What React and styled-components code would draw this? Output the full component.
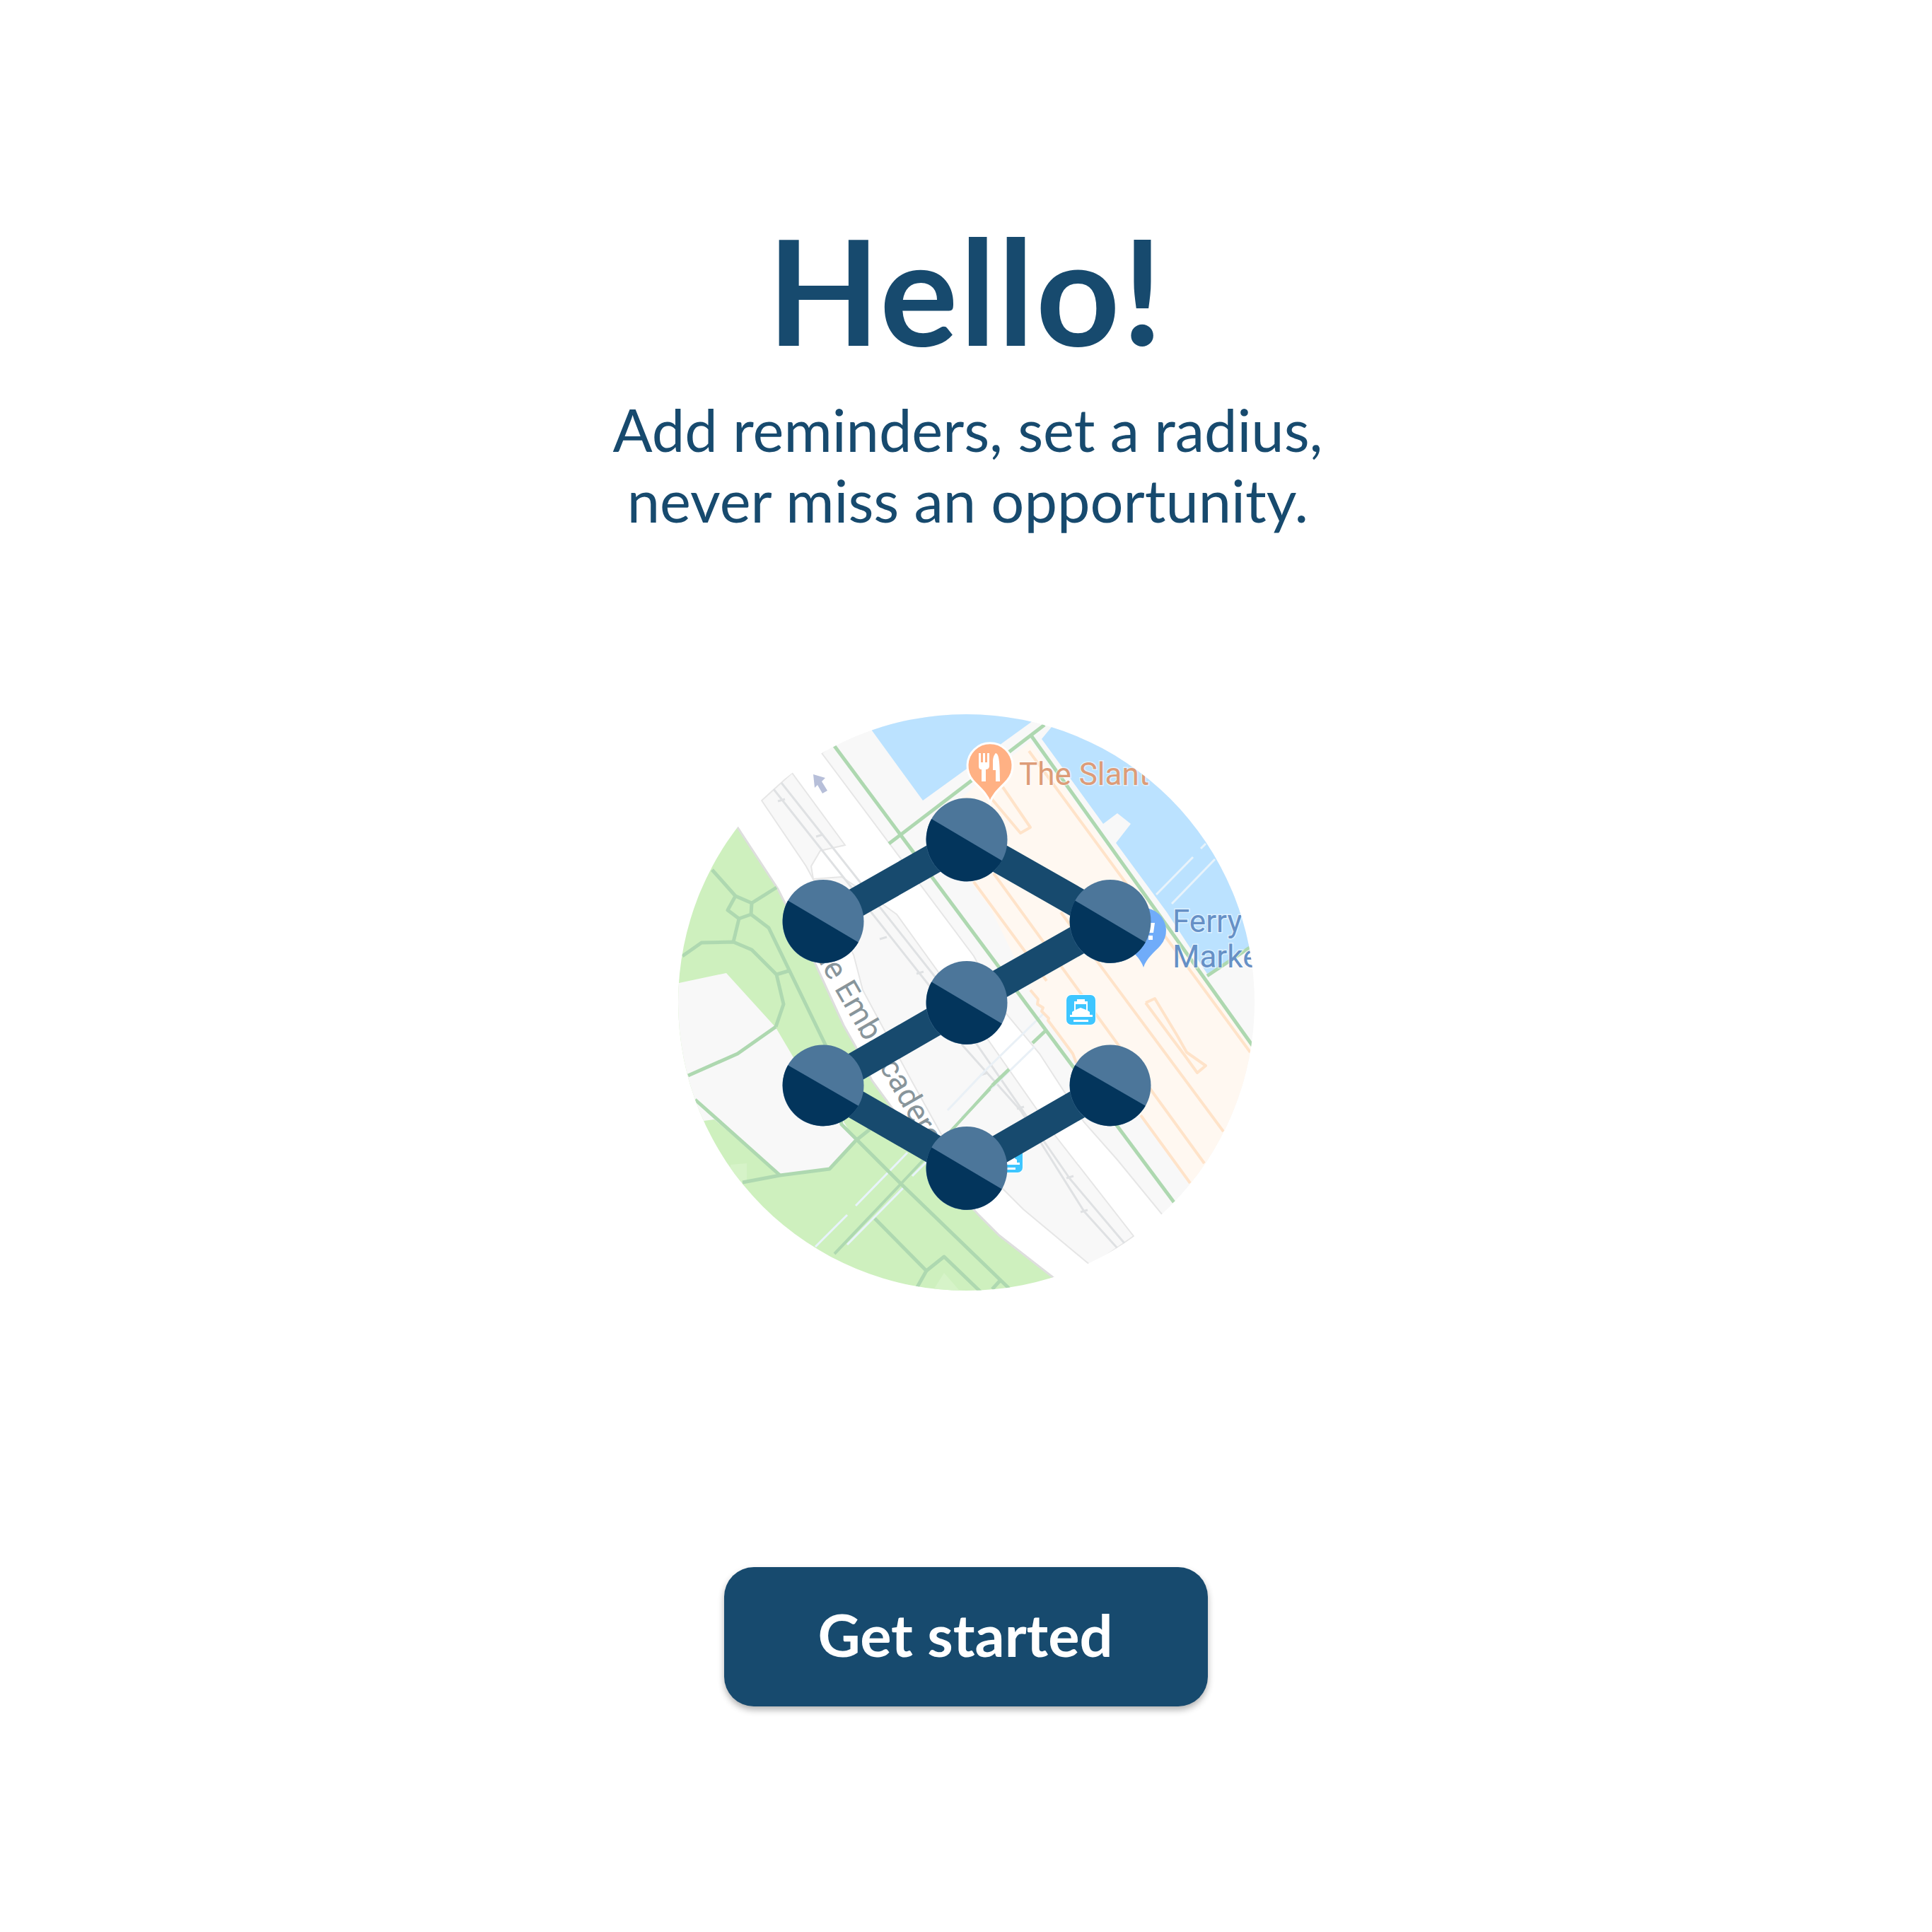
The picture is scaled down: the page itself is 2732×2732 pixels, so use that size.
import React from "react";
import styled, { createGlobalStyle } from "styled-components";

const navy = "#174a6e";

// all map coordinates are page pixels, the svg viewBox starts at the circle's corner
const parkLines = [
  "1007,1230 1040,1267 1063,1277 1098,1255",
  "1040,1267 1029,1287 1045,1299 1062,1293 1063,1277",
  "1045,1299 1037,1332",
  "965,1352 992,1333 1037,1332 1063,1343 1098,1378 1108,1420 1097,1452",
  "1062,1293 1087,1312 1167,1477 1190,1590 1273,1673 1427,1822",
  "1098,1378 1115,1373",
  "973,1521 1043,1490 1097,1452",
  "983,1555 1103,1662",
  "1050,1672 1103,1662 1173,1653 1210,1613 1230,1597",
  "1237,1723 1310,1797 1335,1777 1390,1830",
  "1310,1797 1297,1820",
  "1415,1810 1403,1823",
];

const transitLines = [
  "1180,1055 1660,1700",
  "1458,1040 1790,1505",
  "1257,1193 1477,1025",
  "1460,1475 1478,1458",
  "1403,1535 1427,1512",
  "1707,1380 1767,1340",
];

const thinTransitLines = ["1400,1540 1273,1675 1180,1773", "1347,1597 1403,1535"];

const orangeLines = [
  "1455,1062 1768,1488",
  "1377,1247 1480,1387",
  "1405,1235 1703,1645",
  "1500,1290 1730,1600",
  "1613,1577 1683,1673",
  "1418,1113 1457,1170 1443,1178 1390,1115",
  "1620,1418 1633,1412 1665,1465 1678,1488 1705,1507 1693,1517 1675,1492 1657,1468 1620,1418",
  "1457,1400 1468,1413 1467,1420 1475,1425 1473,1430 1483,1440 1482,1443 1500,1467 1517,1490 1522,1503",
];

const trackLines = [
  "1094,1116 1327,1410",
  "1105,1107 1337,1400",
  "1360,1477 1443,1570 1533,1713 1580,1765",
  "1380,1475 1513,1667 1590,1758",
];

const trackTicks = [
  "1100,1133 1110,1130",
  "1154,1183 1164,1180",
  "1244,1328 1254,1325",
  "1296,1377 1306,1374",
  "1387,1520 1397,1517",
  "1438,1568 1448,1565",
  "1508,1666 1518,1663",
  "1528,1714 1538,1711",
];

const paleLines = ["1477,1432 1397,1510 1340,1570", "1463,1480 1360,1580"];

const waterLines = [
  "1635,1265 1687,1212",
  "1657,1278 1718,1215",
  "1698,1200 1705,1193",
  "1210,1705 1283,1630",
  "1153,1763 1198,1718",
  "1198,1760 1280,1677",
  "1290,1663 1310,1643",
];

const links = "1164,1303 1367,1187.5 1570,1303 1367,1418 1164,1535 1367,1652 1570,1535";

// x, y, vertical radius: the two lower side nodes are a little flatter
const nodes = [
  [1164, 1303, 59],
  [1367, 1187.5, 59],
  [1570, 1303, 59],
  [1367, 1418, 59],
  [1164, 1535, 57.5],
  [1367, 1652, 59],
  [1570, 1535, 57.5],
];

const NODE_RX = 57.5;

const FerryIcon = ({ x, y }) => (
  <g transform={`translate(${x} ${y})`}>
    <rect x="-1" y="-1" width="43" height="44" rx="8" fill="#fff" />
    <rect width="41" height="42" rx="7" fill="#3ec6ff" />
    <path
      d="M15 6h11v3h4v13l3 2v4H8v-4l3-2V9h4zM13 13v8l7-3 8 3v-8z"
      fill="#fff"
      fillRule="evenodd"
    />
    <rect x="5" y="28" width="32" height="3" fill="#fff" />
    <rect x="10" y="35" width="21" height="3" fill="#fff" />
  </g>
);

const MapDrawing = () => (
  <MapSvg viewBox="959 1010 815 815" role="img">
    <defs>
      <clipPath id="mapCircle">
        <circle cx="1366.5" cy="1417.5" r="407.5" />
      </clipPath>
    </defs>
    <g clipPath="url(#mapCircle)">
      <rect x="950" y="1000" width="840" height="840" fill="#fff" />
      <Block points="1162,1065 1240,1000 1800,1000 1800,1800 1643,1717 1580,1640 1533,1587 1470,1490 1420,1430 1377,1352" />
      <Block points="1077,1132 1120,1093 1195,1195 1160,1203 1147,1225 1150,1243 1190,1240 1250,1280 1268,1293 1333,1383 1397,1470 1493,1607 1603,1748 1543,1790 1447,1710 1417,1680 1340,1620 1290,1530 1220,1400 1207,1350 1140,1225" />
      <Water points="1233,1033 1305,1132 1457,1022 1480,1000 1233,1000" />
      <Water points="1487,1028 1473,1045 1560,1165 1580,1150 1599,1165 1578,1192 1650,1290 1707,1377 1770,1338 1800,1338 1800,1000 1500,1000" />
      <Orange points="1357,1130 1457,1048 1790,1505 1800,1540 1700,1700 1683,1673 1613,1577 1522,1503 1500,1467 1483,1440 1457,1400 1400,1283 1377,1253 1320,1180" />
      <Park points="1043,1170 1100,1257 1153,1363 1193,1450 1210,1480 1233,1528 1330,1660 1383,1717 1413,1747 1490,1807 1510,1840 940,1840 940,1160" />
      <Block $plain points="950,1392 1027,1376 1097,1453 1123,1497 1170,1550 1210,1613 1173,1653 1103,1662 1010,1583 995,1585 950,1540" />
      <ParkPatch points="1033,1647 1056,1645 1056,1672 1033,1672" />
      <ParkPatch points="1310,1840 1335,1800 1370,1840" />

      {trackLines.map((line) => (
        <Track key={line} points={line} />
      ))}
      {trackTicks.map((line) => (
        <Track key={line} points={line} />
      ))}
      {paleLines.map((line) => (
        <Pale key={line} points={line} />
      ))}
      {orangeLines.map((line) => (
        <OrangeLine key={line} points={line} />
      ))}
      {waterLines.map((line) => (
        <WaterLine key={line} points={line} />
      ))}
      {parkLines.map((line) => (
        <Transit key={line} points={line} />
      ))}
      {transitLines.map((line) => (
        <Transit key={line} points={line} />
      ))}
      {thinTransitLines.map((line) => (
        <Transit key={line} points={line} $thin />
      ))}

      <polygon
        points="1150,1095 1167,1100 1162,1105 1170,1118 1163,1122 1156,1110 1152,1114"
        fill="#b7bfd9"
      />

      <StreetLabel transform="translate(1137 1324) rotate(60)">The Embarcadero</StreetLabel>

      <path
        d="M1400 1135c-4-13-16-22-24-31a32 32 0 1 1 48 0c-8 9-20 18-24 31z"
        fill="#ffb184"
        stroke="#fff"
        strokeWidth="3"
      />
      <path
        d="M1384 1065h3v13h3v-13h3v13h3v-13h3v18c0 3-2 5-5 5v17h-6v-17c-3 0-4-2-4-5zM1408 1065c4 1 6 8 6 40h-6v-16h-4v-12c0-6 2-10 4-12z"
        fill="#fff"
      />
      <PlaceLabel x="1441" y="1110" $color="#dd9c78">
        The Slant
      </PlaceLabel>

      <path
        d="M1617 1368c-4-13-16-22-24-31a32 32 0 1 1 48 0c-8 9-20 18-24 31z"
        fill="#70acf9"
      />
      <path d="M1626 1305h7l-2 14h-6zM1624 1323h6v6h-6z" fill="#fff" />
      <PlaceLabel x="1658" y="1318" $color="#6690c6">
        Ferry
      </PlaceLabel>
      <PlaceLabel x="1658" y="1368" $color="#6690c6">
        Market
      </PlaceLabel>

      <FerryIcon x="1508" y="1407" />
      <FerryIcon x="1405" y="1616" />
    </g>

    <Links points={links} />
    {nodes.map(([x, y, ry]) => (
      <g key={`${x}-${y}`}>
        <ellipse cx={x} cy={y} rx={NODE_RX} ry={ry} fill="#4c769a" />
        <path
          d={`M${x - NODE_RX * 0.866} ${y - ry / 2}A${NODE_RX} ${ry} 0 0 0 ${x + NODE_RX * 0.866} ${y + ry / 2}Z`}
          fill="#03355c"
        />
      </g>
    ))}
  </MapSvg>
);

const App = () => (
  <>
    <GlobalStyle />
    <Screen>
      <Title>Hello!</Title>
      <Subtitle>
        Add reminders, set a radius,
        <br />
        never miss an opportunity.
      </Subtitle>
      <MapDrawing />
      <StartButton type="button">Get started</StartButton>
    </Screen>
  </>
);

const GlobalStyle = createGlobalStyle`
  body {
    margin: 0;
    background: #fff;
    font-family: Lato, "Liberation Sans", sans-serif;
  }
`;

const Screen = styled.main`
  display: flex;
  flex-direction: column;
  align-items: center;
  height: 2732px;
  padding-top: 281px;
  box-sizing: border-box;
`;

const Title = styled.h1`
  margin: 0;
  font-size: 207px;
  line-height: 256px;
  letter-spacing: 2.5px;
  font-weight: 700;
  color: ${navy};
`;

const Subtitle = styled.p`
  margin: 20px 0 0;
  padding-left: 5px;
  font-size: 83px;
  line-height: 100px;
  font-weight: 400;
  text-align: center;
  color: ${navy};
`;

const MapSvg = styled.svg`
  display: block;
  width: 815px;
  height: 815px;
  margin-top: 253px;
`;

const Block = styled.polygon`
  fill: #f8f8f8;
  stroke: ${({ $plain }) => ($plain ? "none" : "#e6e6e6")};
  stroke-width: 2;
`;

const Water = styled.polygon`
  fill: #bbe2ff;
`;

const Orange = styled.polygon`
  fill: #fff8f1;
`;

const Park = styled.polygon`
  fill: #cef0be;
  stroke: #dedede;
  stroke-width: 3;
`;

const ParkPatch = styled.polygon`
  fill: #d6f3c8;
`;

const MapLine = styled.polyline`
  fill: none;
  stroke-linejoin: round;
`;

const Track = styled(MapLine)`
  stroke: #dfe1e3;
  stroke-width: 3;
`;

const Pale = styled(MapLine)`
  stroke: #e9f0f6;
  stroke-width: 3;
`;

const OrangeLine = styled(MapLine)`
  stroke: #ffe3c9;
  stroke-width: 4;
`;

const WaterLine = styled(MapLine)`
  stroke: #e8f3fb;
  stroke-width: 3;
`;

const Transit = styled(MapLine)`
  stroke: #aed8b0;
  stroke-width: ${({ $thin }) => ($thin ? 4 : 5)};
`;

const Links = styled(MapLine)`
  stroke: ${navy};
  stroke-width: 42;
`;

const StreetLabel = styled.text`
  font-family: Roboto, sans-serif;
  font-size: 44px;
  fill: #88959b;
`;

const PlaceLabel = styled.text`
  font-family: Roboto, sans-serif;
  font-size: 44px;
  fill: ${({ $color }) => $color};
  stroke: rgba(255, 255, 255, 0.5);
  stroke-width: 3;
  paint-order: stroke;
`;

const StartButton = styled.button`
  display: flex;
  align-items: center;
  justify-content: center;
  width: 684px;
  height: 197px;
  margin-top: 391px;
  padding: 0 2px 7px 0;
  border: 0;
  border-radius: 42px;
  background: ${navy};
  color: #fff;
  font-family: Lato, sans-serif;
  font-size: 83px;
  font-weight: 700;
  box-shadow: 0 5px 10px rgba(0, 0, 0, 0.3);
`;

export default App;
